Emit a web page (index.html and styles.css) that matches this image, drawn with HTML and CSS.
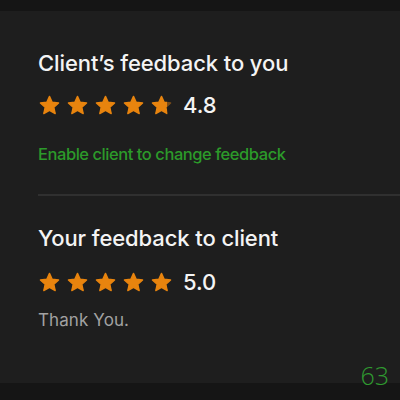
FILE: index.html
```html
<!DOCTYPE html>
<html lang="en">
  <head>
    <meta charset="UTF-8" />
    <meta name="viewport" content="width=device-width, initial-scale=1.0" />
    <title>Feedback</title>
    <link rel="stylesheet" href="styles.css">
  </head>
  <body>
    <svg width="0" height="0" class="defs">
      <defs>
        <symbol id="star" viewBox="0 0 24 24">
          <path d="M12 2.5l2.85 6.1 6.65.75-4.95 4.5 1.4 6.55L12 17.1l-5.95 3.3 1.4-6.55-4.95-4.5 6.65-.75z" />
        </symbol>
        <linearGradient id="part" x1="0" x2="1" y1="0" y2="0">
          <stop offset="0.78" stop-color="#e8840e" />
          <stop offset="0.78" stop-color="#7a4c18" />
        </linearGradient>
      </defs>
    </svg>

    <div class="page">
      <div class="card">
        <div class="section">
          <h2>Client’s feedback to you</h2>
          <div class="rating">
            <div class="stars">
              <svg class="star"><use href="#star" /></svg>
              <svg class="star"><use href="#star" /></svg>
              <svg class="star"><use href="#star" /></svg>
              <svg class="star"><use href="#star" /></svg>
              <svg class="star star-part"><use href="#star" /></svg>
            </div>
            <span class="score">4.8</span>
          </div>
          <p class="action">Enable client to change feedback</p>
        </div>

        <div class="divider"></div>

        <div class="section">
          <h2>Your feedback to client</h2>
          <div class="rating">
            <div class="stars">
              <svg class="star"><use href="#star" /></svg>
              <svg class="star"><use href="#star" /></svg>
              <svg class="star"><use href="#star" /></svg>
              <svg class="star"><use href="#star" /></svg>
              <svg class="star"><use href="#star" /></svg>
            </div>
            <span class="score">5.0</span>
          </div>
          <p class="comment">Thank You.</p>
        </div>
      </div>

      <span class="page-num">63</span>
    </div>
  </body>
</html>
```

FILE: styles.css
```css
* {
  margin: 0;
  padding: 0;
  box-sizing: border-box;
}

body {
  background: #151515;
  font-family: Inter, "Liberation Sans", sans-serif;
  color: #f4f4f4;
}

.defs {
  position: absolute;
}

.page {
  position: relative;
  width: 400px;
  height: 400px;
  padding-top: 11px;
  overflow: hidden;
}

.card {
  background: #1e1e1e;
  height: 372px;
  margin: 0 -14px 0 -14px;
  padding: 39px 0 0 14px;
  border-radius: 14px;
}

.section {
  padding-left: 38px;
}

.section h2 {
  font-size: 22px;
  line-height: 26px;
  font-weight: 500;
  letter-spacing: -0.1px;
}

.rating {
  display: flex;
  align-items: center;
  margin-top: 18px;
  height: 22px;
}

.stars {
  display: flex;
  gap: 5px;
}

.star {
  width: 23px;
  height: 23px;
  fill: #e8840e;
  stroke: #e8840e;
  stroke-width: 1.4;
  stroke-linejoin: round;
}

.star-part {
  fill: url(#part);
  stroke: url(#part);
}

.score {
  margin-left: 10px;
  font-size: 22px;
  line-height: 22px;
  font-weight: 500;
}

.action {
  margin-top: 28px;
  font-size: 16.5px;
  line-height: 20px;
  font-weight: 500;
  letter-spacing: -0.45px;
  color: #2c9a2a;
}

.divider {
  height: 2px;
  margin: 30px 0 29px 38px;
  background: #303030;
}

.section + .divider + .section .rating {
  margin-top: 20px;
}

.comment {
  margin-top: 17px;
  font-size: 17px;
  line-height: 20px;
  letter-spacing: 0.1px;
  color: #a2a2a2;
}

.page-num {
  position: absolute;
  right: 11px;
  bottom: 12px;
  font-family: "Open Sans", sans-serif;
  font-weight: 300;
  font-size: 25px;
  line-height: 25px;
  color: #2f9a30;
}
```
